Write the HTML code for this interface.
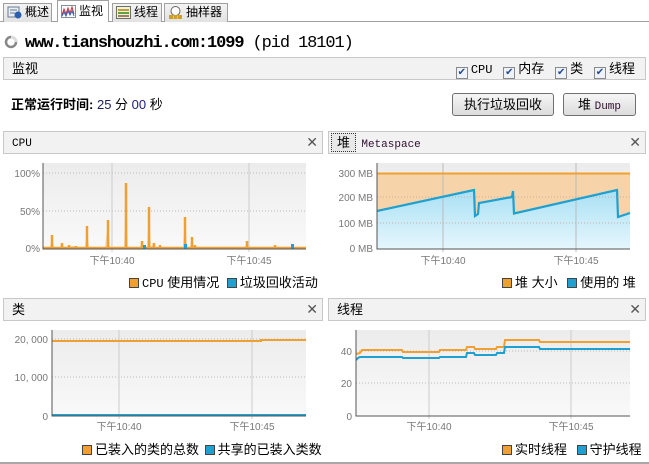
<!DOCTYPE html>
<html><head><meta charset="utf-8"><style>
*{margin:0;padding:0;box-sizing:border-box}
body{width:649px;height:464px;background:#fff;position:relative;overflow:hidden;font-family:"Liberation Sans","Noto Sans CJK SC",sans-serif;font-size:12px;color:#000}
.a{position:absolute;white-space:nowrap}
.tab{position:absolute;top:3px;height:19px;border:1px solid #a0a0a0;border-bottom:none;background:linear-gradient(#f4f4f4,#e2e2e2);font-size:12px;line-height:17px;padding-left:21px}
.tab.on{top:0;height:22px;background:#fff;line-height:21px}
.ic{position:absolute;left:3px;top:2px;width:15px;height:13px}
.hdr{position:absolute;height:23px;border:1px solid #c8c8c8;background:#f2f2f2;font-size:12px;line-height:21px;padding-left:8px}
.x{position:absolute;right:4px;top:0;font-size:14px;color:#555}
.btn{position:absolute;height:23px;border:1px solid #707070;border-radius:3px;background:linear-gradient(#f6f6f6,#dcdcdc);font-size:13px;line-height:21px;text-align:center}
.cb{display:inline-block;width:12px;height:12px;border:1px solid #8a8a8a;background:#eef3fa;vertical-align:-2px;margin-right:3px;font-size:10px;line-height:10px;text-align:center;color:#2a4a90}
.mono{font-family:"Liberation Mono","Noto Sans CJK SC",monospace}
.sq{display:inline-block;width:10px;height:10px;border:1px solid #444;vertical-align:-1px;margin-right:3px}
.lg{position:absolute;font-size:13px}
</style></head><body>
<div class="a" style="left:0;top:21px;width:649px;height:1px;background:#a0a0a0"></div>
<div class="tab" style="left:3px;width:49px"><svg class="ic" viewBox="0 0 15 13"><rect x="1" y="1" width="11" height="10" fill="#e8eef5" stroke="#6a7a90"/><line x1="3" y1="4" x2="10" y2="4" stroke="#6a7a90"/><line x1="3" y1="7" x2="8" y2="7" stroke="#6a7a90"/><circle cx="11" cy="9" r="3.5" fill="#2a5fb0"/></svg>概述</div>
<div class="tab on" style="left:57px;width:52px"><svg class="ic" style="top:4px" viewBox="0 0 15 13"><rect x="0.5" y="0.5" width="14" height="12" fill="#fff" stroke="#8090a0"/><polyline points="1,10 3,4 5,9 7,3 9,8 11,2 13,9" fill="none" stroke="#d03030"/><polyline points="1,11 3,7 5,11 7,6 9,10 11,6 13,11" fill="none" stroke="#3060d0"/></svg>监视</div>
<div class="tab" style="left:112px;width:50px"><svg class="ic" viewBox="0 0 15 13"><rect x="0.5" y="0.5" width="14" height="12" fill="#f0f0e0" stroke="#707060"/><line x1="2" y1="4" x2="13" y2="4" stroke="#c0a030" stroke-width="2"/><line x1="2" y1="7" x2="13" y2="7" stroke="#60a040" stroke-width="2"/><line x1="2" y1="10" x2="13" y2="10" stroke="#a08060" stroke-width="2"/></svg>线程</div>
<div class="tab" style="left:164px;width:64px"><svg class="ic" viewBox="0 0 15 13"><circle cx="7.5" cy="5" r="4.5" fill="#fff" stroke="#666"/><rect x="1" y="9" width="4" height="4" fill="#d0a020"/><rect x="10" y="9" width="4" height="4" fill="#d0a020"/><rect x="5.5" y="9" width="4" height="4" fill="#d0a020"/></svg>抽样器</div>

<svg class="a" style="left:4px;top:35px" width="14" height="14" viewBox="0 0 14 14"><circle cx="7" cy="7" r="5" fill="none" stroke="#888" stroke-width="2.5"/><path d="M7 2 A5 5 0 0 1 12 7" stroke="#ddd" stroke-width="2.5" fill="none"/></svg>
<div class="a mono" style="left:25px;top:34px;font-size:17px;line-height:20px;letter-spacing:-1.1px"><b>www.tianshouzhi.com:1099</b> (pid 18101)</div>

<div class="hdr" style="left:3px;top:57px;width:643px;height:23px;font-size:13px">监视
<span class="a" style="right:10px;top:0;font-size:13px"><span class="cb">✔</span><span class="mono" style="font-size:12px">CPU</span>&nbsp;&nbsp; <span class="cb">✔</span>内存&nbsp;&nbsp; <span class="cb">✔</span>类&nbsp;&nbsp; <span class="cb">✔</span>线程</span></div>

<div class="a" style="left:11px;top:94px;font-size:13px"><b>正常运行时间:</b> <span style="color:#202060">25</span> 分 <span style="color:#202080">00</span> 秒</div>
<div class="btn" style="left:452px;top:93px;width:102px">执行垃圾回收</div>
<div class="btn" style="left:563px;top:93px;width:73px">堆 <span class="mono" style="font-size:11px;color:#301030">Dump</span></div>

<div class="hdr" style="left:3px;top:131px;width:320px"><span class="mono" style="font-size:11px">CPU</span><span class="x">✕</span></div>
<div class="hdr" style="left:328px;top:131px;width:318px;padding-left:0"><span style="display:inline-block;border:1px dotted #333;background:#e8e8e8;padding:0 5px;line-height:17px;margin:1px 2px;font-size:13px">堆</span> <span class="mono" style="font-size:11px;color:#301030">Metaspace</span><span class="x">✕</span></div>
<div class="hdr" style="left:3px;top:298px;width:320px;font-size:13px">类<span class="x">✕</span></div>
<div class="hdr" style="left:328px;top:298px;width:318px;font-size:13px">线程<span class="x">✕</span></div>
<div class="a" style="left:0;top:462px;width:649px;height:2px;background:#a8a8a8"></div>

<svg class="a" style="left:0;top:0" width="649" height="464" font-family="Liberation Sans, Noto Sans CJK SC, sans-serif" font-size="10" fill="#777">
<defs>
<linearGradient id="bg" x1="0" y1="0" x2="0" y2="1"><stop offset="0" stop-color="#ececec"/><stop offset="1" stop-color="#f9f9f9"/></linearGradient>
<linearGradient id="bl" x1="0" y1="0" x2="0" y2="1"><stop offset="0" stop-color="#a8e0f4"/><stop offset="1" stop-color="#e6f6fd"/></linearGradient>
</defs>
<rect x="43" y="163" width="263" height="86" fill="url(#bg)"/>
<g stroke="#bbb" stroke-dasharray="1,2"><line x1="43" y1="173" x2="306" y2="173"/><line x1="43" y1="211" x2="306" y2="211"/></g>
<g stroke="#ccc"><line x1="112" y1="163" x2="112" y2="252"/><line x1="249" y1="163" x2="249" y2="252"/></g>
<polygon fill="#f5d6aa" points="43,249 45,247 50,247 52,235 54,247 60,247 62,243 64,247 70,247 72,246 80,247 85,247 87,226 89,247 105,247 108,220 110,247 124,247 126,183 128,247 140,247 142,241 144,247 147,247 149,207 151,247 153,243 155,247 183,247 185,217 187,247 190,247 192,237 194,247 245,247 247,241 249,247 306,247 306,249"/>
<g stroke="#f0a030" stroke-width="2.5" fill="none"><polyline points="43,248 306,248"/>
<line x1="52" y1="248" x2="52" y2="235"/><line x1="62" y1="248" x2="62" y2="243"/><line x1="69" y1="248" x2="69" y2="245"/><line x1="76" y1="248" x2="76" y2="246"/><line x1="87" y1="248" x2="87" y2="226"/><line x1="108" y1="248" x2="108" y2="220"/><line x1="126" y1="248" x2="126" y2="183"/><line x1="142" y1="248" x2="142" y2="241"/><line x1="149" y1="248" x2="149" y2="207"/><line x1="154" y1="248" x2="154" y2="243"/><line x1="160" y1="248" x2="160" y2="245"/><line x1="185" y1="248" x2="185" y2="217"/><line x1="192" y1="248" x2="192" y2="237"/><line x1="195" y1="248" x2="195" y2="245"/><line x1="247" y1="248" x2="247" y2="241"/><line x1="275" y1="248" x2="275" y2="245"/></g>
<g fill="#20a0d0"><rect x="143" y="245" width="3" height="4"/><rect x="184" y="244" width="3" height="5"/><rect x="291" y="244" width="3" height="5"/></g>
<polyline points="43,163 43,249 306,249" fill="none" stroke="#555"/>
<g text-anchor="end"><text x="40" y="177">100%</text><text x="40" y="215">50%</text><text x="40" y="252">0%</text></g>
<g text-anchor="middle"><text x="112" y="264">下午10:40</text><text x="249" y="264">下午10:45</text></g>
<rect x="377" y="163" width="253" height="86" fill="url(#bg)"/>
<rect x="377" y="173" width="253" height="76" fill="#f6d3a8"/>
<polygon fill="url(#bl)" points="377,211 474,190 475,216 478,214 479,203 512,197 513,191 514,213.5 617,190 618,217 630,213 630,249 377,249"/>
<g stroke="#c8b0a0" stroke-dasharray="1,2"><line x1="377" y1="197" x2="630" y2="197"/><line x1="377" y1="223" x2="630" y2="223"/></g>
<g stroke="#bbb"><line x1="443" y1="163" x2="443" y2="252"/><line x1="576" y1="163" x2="576" y2="252"/></g>
<line x1="377" y1="173.5" x2="630" y2="173.5" stroke="#f0a030" stroke-width="2"/>
<polyline points="377,211 474,190 475,216 478,214 479,203 512,197 513,191 514,213.5 617,190 618,217 630,213" fill="none" stroke="#20a0d0" stroke-width="2.2"/>
<polyline points="377,163 377,249 630,249" fill="none" stroke="#555"/>
<g text-anchor="end"><text x="373" y="177">300 MB</text><text x="373" y="201">200 MB</text><text x="373" y="227">100 MB</text><text x="373" y="252">0 MB</text></g>
<g text-anchor="middle"><text x="443" y="264">下午10:40</text><text x="576" y="264">下午10:45</text></g>
<rect x="52" y="330" width="254" height="86" fill="url(#bg)"/>
<g stroke="#bbb" stroke-dasharray="1,2"><line x1="52" y1="339" x2="306" y2="339"/><line x1="52" y1="377" x2="306" y2="377"/></g>
<g stroke="#ccc"><line x1="119" y1="330" x2="119" y2="419"/><line x1="252" y1="330" x2="252" y2="419"/></g>
<polyline points="52,341 261,341 261,340 306,340" fill="none" stroke="#f0a030" stroke-width="2"/>
<line x1="52" y1="415" x2="306" y2="415" stroke="#20a0d0" stroke-width="2"/>
<polyline points="52,330 52,416 306,416" fill="none" stroke="#555"/>
<g text-anchor="end"><text x="48" y="343">20, 000</text><text x="48" y="381">10, 000</text><text x="48" y="420">0</text></g>
<g text-anchor="middle"><text x="119" y="430">下午10:40</text><text x="252" y="430">下午10:45</text></g>
<rect x="356" y="330" width="274" height="86" fill="url(#bg)"/>
<g stroke="#bbb" stroke-dasharray="1,2"><line x1="356" y1="351" x2="630" y2="351"/><line x1="356" y1="383" x2="630" y2="383"/></g>
<g stroke="#ccc"><line x1="429" y1="330" x2="429" y2="419"/><line x1="571" y1="330" x2="571" y2="419"/></g>
<polyline points="356,354 360,353 362,350 402,350 403,352 439,352 440,350 466,350 467,347 474,347 475,349 496,349 497,347 504,347 505,340 539,340 540,342 630,342" fill="none" stroke="#f0a030" stroke-width="2"/>
<polyline points="356,360 358,358 360,357 402,357 403,358 439,358 440,357 466,357 467,353 474,353 475,355 496,355 497,353 504,353 505,347 539,347 540,349 630,349" fill="none" stroke="#20a0d0" stroke-width="2"/>
<polyline points="356,330 356,416 630,416" fill="none" stroke="#555"/>
<g text-anchor="end"><text x="352" y="355">40</text><text x="352" y="387">20</text><text x="352" y="420">0</text></g>
<g text-anchor="middle"><text x="429" y="430">下午10:40</text><text x="571" y="430">下午10:45</text></g>
</svg>

<div class="lg" style="left:129px;top:272px"><span class="sq" style="background:#f0a030"></span><span class="mono" style="font-size:12px">CPU</span> 使用情况 <span class="sq" style="background:#20a0d0;margin-left:4px"></span>垃圾回收活动</div>
<div class="lg" style="left:502px;top:272px"><span class="sq" style="background:#f0a030"></span>堆 大小 <span class="sq" style="background:#20a0d0;margin-left:6px"></span>使用的 堆</div>
<div class="lg" style="left:82px;top:439px"><span class="sq" style="background:#f0a030"></span>已装入的类的总数 <span class="sq" style="background:#20a0d0;margin-left:2px"></span>共享的已装入类数</div>
<div class="lg" style="left:502px;top:439px"><span class="sq" style="background:#f0a030"></span>实时线程 <span class="sq" style="background:#20a0d0;margin-left:6px"></span>守护线程</div>
</body></html>
